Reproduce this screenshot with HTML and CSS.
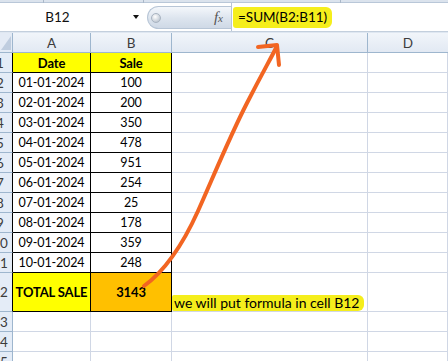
FILE: index.html
```html
<!DOCTYPE html>
<html>
<head>
<meta charset="utf-8">
<link rel="stylesheet" href="styles.css">
</head>
<body>
<div class="topband">
  <span class="tab t1"></span><span class="tab t2"></span><span class="tab t3"></span>
</div>
<div class="fbar">
  <div class="namebox">
    <span class="ref">B12</span>
    <span class="dd"></span>
  </div>
  <div class="pill">
    <span class="knob"></span>
    <span class="fx">f<span class="x">x</span></span>
  </div>
  <div class="finput"><span class="hl">=SUM(B2:B11)</span></div>
</div>
<div class="gap"></div>
<div class="sheet">
  <div class="corner"><span class="tri"></span></div>
  <div class="ch">A</div><div class="ch">B</div><div class="ch">C</div><div class="ch last">D</div>

  <div class="rh bk"><span>1</span></div><div class="c b y bold">Date</div><div class="c b y bold">Sale</div><div class="c"></div><div class="c"></div>
  <div class="rh bk"><span>2</span></div><div class="c b">01-01-2024</div><div class="c b">100</div><div class="c"></div><div class="c"></div>
  <div class="rh bk"><span>3</span></div><div class="c b">02-01-2024</div><div class="c b">200</div><div class="c"></div><div class="c"></div>
  <div class="rh bk"><span>4</span></div><div class="c b">03-01-2024</div><div class="c b">350</div><div class="c"></div><div class="c"></div>
  <div class="rh bk"><span>5</span></div><div class="c b">04-01-2024</div><div class="c b">478</div><div class="c"></div><div class="c"></div>
  <div class="rh bk"><span>6</span></div><div class="c b">05-01-2024</div><div class="c b">951</div><div class="c"></div><div class="c"></div>
  <div class="rh bk"><span>7</span></div><div class="c b">06-01-2024</div><div class="c b">254</div><div class="c"></div><div class="c"></div>
  <div class="rh bk"><span>8</span></div><div class="c b">07-01-2024</div><div class="c b">25</div><div class="c"></div><div class="c"></div>
  <div class="rh bk"><span>9</span></div><div class="c b">08-01-2024</div><div class="c b">178</div><div class="c"></div><div class="c"></div>
  <div class="rh bk"><span>10</span></div><div class="c b">09-01-2024</div><div class="c b">359</div><div class="c"></div><div class="c"></div>
  <div class="rh bk"><span>11</span></div><div class="c b">10-01-2024</div><div class="c b">248</div><div class="c"></div><div class="c"></div>
  <div class="rh bk"><span>12</span></div><div class="c b y bold mid">TOTAL SALE</div><div class="c b o bold mid">3143</div><div class="c left"><span class="note">we will put formula in cell B12</span></div><div class="c"></div>
  <div class="rh"><span>13</span></div><div class="c"></div><div class="c"></div><div class="c"></div><div class="c"></div>
  <div class="rh"><span>14</span></div><div class="c"></div><div class="c"></div><div class="c"></div><div class="c"></div>
  <div class="rh"><span>15</span></div><div class="c"></div><div class="c"></div><div class="c"></div><div class="c"></div>
</div>
<svg class="arrow" width="448" height="361" viewBox="0 0 448 361">
  <path d="M144 286 C166 270 184 242 198 211 S229 138 247 103 S269 62 277 46" fill="none" stroke="#f26522" stroke-width="4" stroke-linecap="round" stroke-linejoin="round"/>
  <path d="M258 47 L277 45 L279 65" fill="none" stroke="#f26522" stroke-width="4" stroke-linecap="round" stroke-linejoin="round"/>
</svg>
</body>
</html>
```
FILE: styles.css
```css
* { box-sizing: border-box; }
html, body { margin: 0; padding: 0; }
body {
  width: 448px;
  height: 361px;
  overflow: hidden;
  background: #fff;
  font-family: Lato, "Open Sans", sans-serif;
  color: #000;
  position: relative;
}
.topband {
  height: 3px;
  background: #dbe3ed;
  border-bottom: 1px solid #b9c7d8;
  position: relative;
}
.tab { position: absolute; top: 0; width: 1px; height: 3px; background: #aab8c9; }
.t1 { left: 43px; }
.t2 { left: 143px; }
.t3 { left: 340px; }
.fbar {
  height: 28px;
  display: flex;
  align-items: stretch;
  background: #fff;
}
.namebox {
  width: 145px;
  display: flex;
  align-items: center;
}
.ref {
  width: 115px;
  text-align: center;
  font-size: 13.5px;
  color: #111;
}
.dd {
  margin-left: 18px;
  width: 0; height: 0;
  border-left: 3.5px solid transparent;
  border-right: 3.5px solid transparent;
  border-top: 4px solid #111;
}
.pill {
  width: 84px;
  margin: 3px 0 2px 2px;
  border-radius: 12px 0 0 12px;
  background: linear-gradient(#f4f7fb, #dce4ee 55%, #cfd9e6);
  border: 1px solid #b7c5d6;
  border-right: none;
  display: flex;
  align-items: center;
  position: relative;
}
.knob {
  width: 10px; height: 10px;
  margin-left: 3px;
  border-radius: 50%;
  background: radial-gradient(circle at 40% 35%, #fff, #c4ccd6 70%, #9ea9b6);
  border: 1px solid #a9b4c1;
}
.fx {
  margin-left: auto;
  margin-right: 8px;
  font-family: "Liberation Serif", serif;
  font-style: italic;
  font-size: 15px;
  color: #555;
}
.fx .x { font-size: 11px; }
.finput {
  flex: 1;
  border-left: 1px solid #b7c5d6;
  display: flex;
  align-items: center;
  padding-left: 1px;
}
.hl {
  background: #f5ee1c;
  border-radius: 3px 6px 6px 3px;
  padding: 3px 5px 3px 5px;
  font-size: 13.5px;
  line-height: 15px;
}
.gap {
  height: 2px;
  background: #dfe7f1;
  border-top: 1px solid #c3cfdd;
}
.sheet {
  display: grid;
  grid-template-columns: 13px 78px 81px 196px 1fr;
  grid-template-rows: 20px repeat(11, 20px) 39px 20px 20px 20px;
  font-size: 12.5px;
}
.corner {
  background: #e4ebf5;
  border-right: 1px solid #9eb6ce;
  border-bottom: 1px solid #9eb6ce;
  position: relative;
  overflow: hidden;
}
.tri {
  position: absolute;
  right: 1px; bottom: 2px;
  width: 0; height: 0;
  border-left: 10px solid transparent;
  border-bottom: 14px solid #bfcddf;
}
.ch {
  background: linear-gradient(#f1f5fa, #e2e9f3);
  border-right: 1px solid #9eb6ce;
  border-bottom: 1px solid #9eb6ce;
  display: flex;
  align-items: center;
  justify-content: center;
  color: #3c3c3c;
  font-size: 13.5px;
}
.ch.last { border-right: none; }
.rh {
  background: #e4ecf7;
  border-right: 1px solid #9eb6ce;
  border-bottom: 1px solid #9eb6ce;
  overflow: hidden;
  display: flex;
  align-items: center;
  color: #3c3c3c;
  font-size: 13.5px;
}
.rh span {
  flex: none;
  width: 24px;
  margin-left: -12px;
  text-align: center;
}
.rh.bk { border-right-color: #000; }
.c {
  border-right: 1px solid #d0d7e5;
  border-bottom: 1px solid #d0d7e5;
  display: flex;
  align-items: flex-end;
  justify-content: center;
  padding-bottom: 2px;
  line-height: 14px;
  white-space: nowrap;
  letter-spacing: -0.15px;
}
.c.b { border-color: #000; }
.c.y { background: #ffff00; }
.c.o { background: #ffc000; }
.bold { font-weight: 700; font-size: 13px; }
.c.mid { align-items: center; padding-bottom: 0; }
.c.left { justify-content: flex-start; padding-left: 0; padding-bottom: 0; overflow: visible; }
.note {
  background: #f5ee1c;
  border-radius: 2px 6px 6px 2px;
  padding: 1px 5px 1px 2px;
  font-size: 14px;
  line-height: 14px;
  letter-spacing: 0;
}
.arrow {
  position: absolute;
  left: 0; top: 0;
  pointer-events: none;
}
```
